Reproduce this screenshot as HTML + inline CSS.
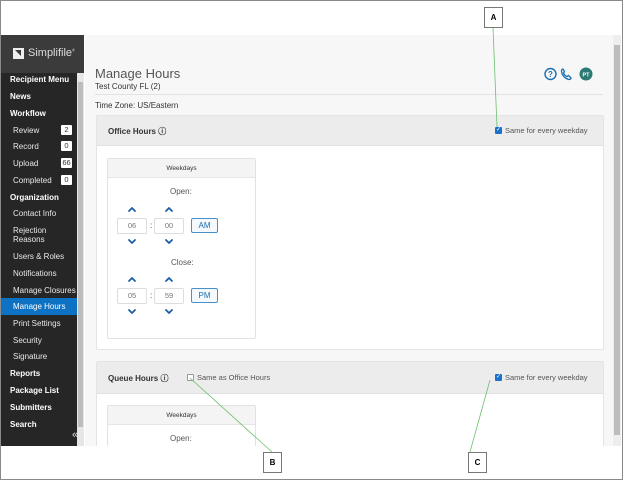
<!DOCTYPE html>
<html><head><style>
*{margin:0;padding:0;box-sizing:border-box}
body{width:623px;height:480px;position:relative;background:#fff;font-family:"Liberation Sans",sans-serif;overflow:hidden}
.a{position:absolute}
.frame{left:0;top:0;width:623px;height:480px;border:1px solid #8a8a8a}
.side{left:1px;top:35px;width:83px;height:411px;background:#262626}
.logo{left:1px;top:35px;width:83px;height:38px;background:#3b3b3b;color:#ddd;font-size:11px}
.si{color:#fff;font-size:8px;font-weight:bold;left:10px}
.ss{color:#e8e8e8;font-size:8px;left:13px}
.bd{left:61px;width:11px;height:10px;background:#fff;color:#333;font-size:7.5px;text-align:center;line-height:10px;border-radius:1px}
.main{left:85px;top:35px;width:528px;height:411px;background:#f7f7f7}
.panel{background:#fff;border:1px solid #e4e4e4;border-radius:2px}
.ph{background:#ececec;border-bottom:1px solid #e0e0e0}
.t{font-size:8px;color:#333}
.card{border:1px solid #e2e2e2;background:#fff;border-radius:2px}
.inp{width:30px;height:16px;border:1px solid #ddd;border-radius:2px;font-size:7.5px;color:#777;text-align:center;line-height:14px}
.btn{width:27px;height:15px;border:1px solid #4a90c8;border-radius:2px;font-size:8px;color:#1a6fb0;text-align:center;line-height:13px;background:#f4f9fd}
.cb{width:7px;height:7px;border:1px solid #999;background:#fff;border-radius:1px}
.cbc{width:7px;height:7px;background:#1a73c8;border-radius:1px;color:#fff;font-size:6px;line-height:7px;text-align:center}
.call{width:19px;height:21px;border:1px solid #777;background:#fff;font-size:8px;font-weight:bold;text-align:center;line-height:20px}
.sm{font-size:7.5px;color:#555}
</style></head><body>
<div class="a frame"></div>
<div class="a side"></div>
<div class="a logo"><div class="a" style="left:12px;top:13px;width:11px;height:11px;background:#eee"></div><svg class="a" style="left:12px;top:13px" width="11" height="11"><path d="M2 2 H8 V8 Z" fill="#3b3b3b"/></svg><span class="a" style="left:27px;top:12px">Simplifile<sup style="font-size:4px">®</sup></span></div>
<div class="a" style="left:77px;top:73px;width:7px;height:373px;background:#e6e6e6"></div>
<div class="a" style="left:78px;top:82px;width:5px;height:345px;background:#bdbdbd"></div>
<div class="a si" style="top:75px">Recipient Menu</div>
<div class="a si" style="top:92px">News</div>
<div class="a si" style="top:109px">Workflow</div>
<div class="a ss" style="top:126px">Review</div><div class="a bd" style="top:125px">2</div>
<div class="a ss" style="top:142px">Record</div><div class="a bd" style="top:141px">0</div>
<div class="a ss" style="top:159px">Upload</div><div class="a bd" style="top:158px">66</div>
<div class="a ss" style="top:176px">Completed</div><div class="a bd" style="top:175px">0</div>
<div class="a si" style="top:193px">Organization</div>
<div class="a ss" style="top:209px">Contact Info</div>
<div class="a ss" style="top:226px;line-height:9px">Rejection<br>Reasons</div>
<div class="a ss" style="top:252px">Users &amp; Roles</div>
<div class="a ss" style="top:269px">Notifications</div>
<div class="a ss" style="top:286px">Manage Closures</div>
<div class="a" style="left:1px;top:298px;width:76px;height:17px;background:#0e72c4"></div>
<div class="a ss" style="top:302px;color:#fff">Manage Hours</div>
<div class="a ss" style="top:319px">Print Settings</div>
<div class="a ss" style="top:336px">Security</div>
<div class="a ss" style="top:352px">Signature</div>
<div class="a si" style="top:369px">Reports</div>
<div class="a si" style="top:386px">Package List</div>
<div class="a si" style="top:403px">Submitters</div>
<div class="a si" style="top:420px">Search</div>
<div class="a" style="left:72px;top:429px;color:#ddd;font-size:11px">«</div>
<div class="a main"></div>
<div class="a" style="left:613px;top:35px;width:8px;height:411px;background:#eee"></div>
<div class="a" style="left:614px;top:45px;width:6px;height:390px;background:#bdbdbd"></div>
<div class="a" style="left:95px;top:66px;font-size:13px;color:#555">Manage Hours</div>
<div class="a t" style="left:95px;top:82px">Test County FL (2)</div>
<div class="a" style="left:95px;top:94px;width:508px;height:1px;background:#e2e2e2"></div>
<div class="a t" style="left:95px;top:101px">Time Zone: US/Eastern</div>
<svg class="a" style="left:544px;top:67px" width="50" height="14"><circle cx="6.5" cy="7" r="5.5" fill="none" stroke="#1a6fb0" stroke-width="1.4"/><text x="6.5" y="10" font-size="8" text-anchor="middle" fill="#1a6fb0" font-family="Liberation Sans" font-weight="bold">?</text><path d="M19 2 q-1.5 0 -1.5 2.5 q1 6 7 8 q2.5 0 2.5 -1.5 l-2.5 -2.5 l-1.5 1 q-2.5 -1 -3.5 -3.5 l1 -1.5z" fill="none" stroke="#1a6fb0" stroke-width="1.3"/><circle cx="42" cy="7" r="6.5" fill="#2c7a74"/><text x="42" y="9.3" font-size="5.5" text-anchor="middle" fill="#fff" font-weight="bold" font-family="Liberation Sans">PT</text></svg>
<div class="a panel" style="left:96px;top:115px;width:508px;height:235px"></div>
<div class="a ph" style="left:97px;top:116px;width:506px;height:30px"></div>
<div class="a t" style="left:108px;top:126px;font-weight:bold">Office Hours ⓘ</div>
<div class="a cbc" style="left:495px;top:127px">✓</div>
<div class="a sm" style="left:505px;top:126px">Same for every weekday</div>
<div class="a card" style="left:107px;top:158px;width:149px;height:181px"></div>
<div class="a" style="left:108px;top:159px;width:147px;height:19px;background:#f4f4f4;border-bottom:1px solid #e6e6e6;font-size:6.5px;text-align:center;line-height:19px;color:#333">Weekdays</div>
<div class="a t" style="left:170px;top:187px;color:#555">Open:</div>
<div class="a inp" style="left:117px;top:218px">06</div><div class="a t" style="left:150px;top:221px">:</div><div class="a inp" style="left:154px;top:218px">00</div><div class="a btn" style="left:191px;top:218px">AM</div>
<div class="a t" style="left:171px;top:258px;color:#555">Close:</div>
<div class="a inp" style="left:117px;top:288px">05</div><div class="a t" style="left:150px;top:291px">:</div><div class="a inp" style="left:154px;top:288px">59</div><div class="a btn" style="left:191px;top:288px">PM</div>
<svg class="a" style="left:0;top:0" width="623" height="480"><g fill="none" stroke="#1a5ea8" stroke-width="1.8" stroke-linecap="round" stroke-linejoin="round">
<path d="M129 211 l3 -3 l3 3"/><path d="M166 211 l3 -3 l3 3"/>
<path d="M129 240 l3 3 l3 -3"/><path d="M166 240 l3 3 l3 -3"/>
<path d="M129 281 l3 -3 l3 3"/><path d="M166 281 l3 -3 l3 3"/>
<path d="M129 310 l3 3 l3 -3"/><path d="M166 310 l3 3 l3 -3"/>
</g></svg>
<div class="a panel" style="left:96px;top:361px;width:508px;height:90px"></div>
<div class="a ph" style="left:97px;top:362px;width:506px;height:32px"></div>
<div class="a t" style="left:108px;top:373px;font-weight:bold">Queue Hours ⓘ</div>
<div class="a cb" style="left:187px;top:374px"></div>
<div class="a sm" style="left:197px;top:373px">Same as Office Hours</div>
<div class="a cbc" style="left:495px;top:374px">✓</div>
<div class="a sm" style="left:505px;top:373px">Same for every weekday</div>
<div class="a card" style="left:107px;top:405px;width:149px;height:45px"></div>
<div class="a" style="left:108px;top:406px;width:147px;height:19px;background:#f4f4f4;border-bottom:1px solid #e6e6e6;font-size:6.5px;text-align:center;line-height:19px;color:#333">Weekdays</div>
<div class="a t" style="left:170px;top:434px;color:#555">Open:</div>
<div class="a" style="left:1px;top:446px;width:621px;height:33px;background:#fff"></div>
<svg class="a" style="left:0;top:0" width="623" height="480"><g stroke="#6cc06c" stroke-width="0.8"><line x1="493" y1="28" x2="497" y2="127"/><line x1="190" y1="378" x2="272" y2="452"/><line x1="490" y1="380" x2="470" y2="452"/></g></svg>
<div class="a call" style="left:484px;top:7px">A</div>
<div class="a call" style="left:263px;top:452px">B</div>
<div class="a call" style="left:468px;top:452px">C</div>
</body></html>
